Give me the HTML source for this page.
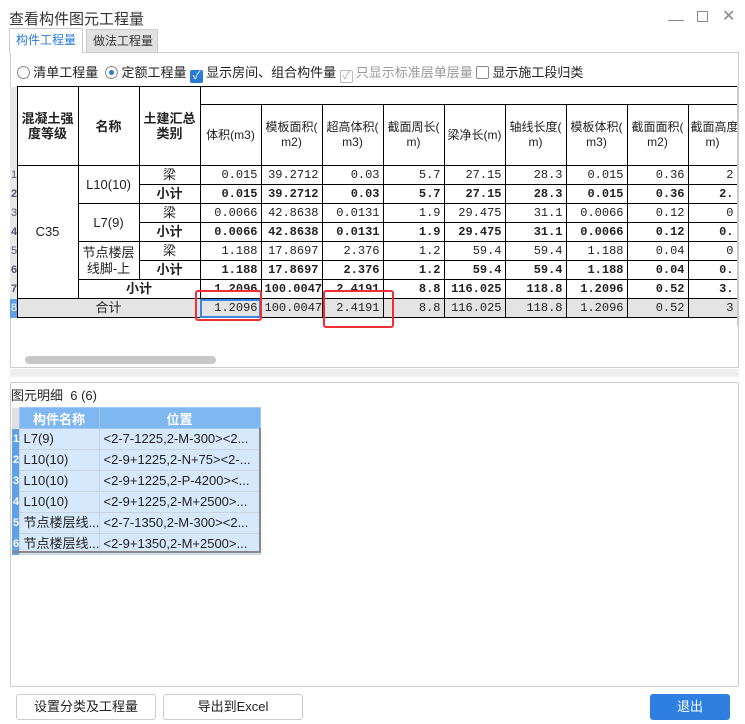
<!DOCTYPE html>
<html><head><meta charset="utf-8"><style>
*{box-sizing:border-box;margin:0;padding:0}
body{width:745px;height:724px;background:#fff;position:relative;overflow:hidden;font-family:"Liberation Sans","Noto Sans CJK SC",sans-serif;font-size:12px;color:#222}
.a{position:absolute}
.title{left:9px;top:8px;font-size:15px;color:#333}
.tab{top:29px;height:23px;font-size:12px;line-height:17px;padding:3px 6px;border:1px solid #ccc;border-bottom:none;white-space:nowrap}
table{border-collapse:collapse;table-layout:fixed}
#g td{border:1px solid #000;height:19px;line-height:16px;padding:0 3px;text-align:right;font-family:"Liberation Mono","Noto Sans CJK SC",monospace;font-size:12px;white-space:nowrap;overflow:hidden}
#g td.c{text-align:center;font-family:"Liberation Sans","Noto Sans CJK SC",sans-serif;font-size:13px}
#g tr.b td{font-weight:bold}
#g th{border:1px solid #000;font-weight:normal;font-size:12px;line-height:15px;padding:0 2px;overflow:hidden;white-space:nowrap}
#g th.h{font-weight:bold;font-size:13px}
#g tr.t td{background:#e4e4e4;font-weight:normal}
#g td.ix{border:none;border-right:1px solid #000;background:#e8e8e8;color:#557;font-size:11px;text-align:left;padding:0 1px;font-family:"Liberation Sans",sans-serif}
#s td{height:21px;line-height:18px;border:1px solid #c8d4e0;background:#d6e8fb;font-size:13px;padding:0 4px;white-space:nowrap;overflow:hidden}
#s th{height:21px;background:#7fb8f0;color:#fff;font-size:13px;border:1px solid #a0c8f0}
#s td.ix{background:#5fa0e6;color:#fff;font-size:11px;padding:0 1px;font-weight:bold;border:none}
.btn{top:694px;height:26px;border:1px solid #ccc;border-radius:3px;text-align:center;line-height:24px;font-size:13px;background:#fff}
.cb{display:inline-block;width:13px;height:13px;border:1px solid #888;vertical-align:-2px;margin-right:3px;border-radius:2px}
.rd{display:inline-block;width:13px;height:13px;border:1px solid #888;border-radius:50%;vertical-align:-2px;margin-right:3px;position:relative}
</style></head><body>
<div class="a title">查看构件图元工程量</div>
<div class="a" style="left:668px;top:9px;width:16px;height:12px;border-bottom:1px solid #888"></div>
<div class="a" style="left:697px;top:11px;width:11px;height:11px;border:1px solid #888"></div>
<div class="a" style="left:722px;top:6px;color:#888;font-size:16px">✕</div>
<div class="a" style="left:10px;top:52px;width:729px;height:316px;border:1px solid #ccc"></div>
<div class="a tab" style="left:9px;top:28px;width:74px;height:25px;background:#fff;color:#2a7ad8;z-index:2">构件工程量</div>
<div class="a tab" style="left:86px;width:72px;background:#e2e2e2;color:#333">做法工程量</div>
<div class="a" style="left:10px;top:62px;width:728px;font-size:13px;white-space:nowrap">
&nbsp;&nbsp;<span class="rd"></span>清单工程量 &nbsp;<span class="rd"><span style="position:absolute;left:3px;top:3px;width:5px;height:5px;border-radius:50%;background:#2a7ad8"></span></span>定额工程量 <span class="cb" style="background:#2a7ad8;border-color:#2a7ad8;color:#fff;font-size:11px;line-height:11px;text-align:center">✓</span>显示房间、组合构件量 <span style="color:#999"><span class="cb" style="border-color:#bbb;color:#aaa;font-size:11px;line-height:11px;text-align:center">✓</span>只显示标准层单层量</span> <span class="cb"></span>显示施工段归类</div>
<table id="g" class="a" style="left:10px;top:86px;width:727px">
<colgroup><col style="width:7px"><col style="width:61px"><col style="width:61px"><col style="width:61px"><col style="width:61px"><col style="width:61px"><col style="width:61px"><col style="width:61px"><col style="width:61px"><col style="width:61px"><col style="width:61px"><col style="width:61px"><col style="width:49px"></colgroup>
<tr style="height:18px"><td class="ix" rowspan="2"></td><th class="h" rowspan="2">混凝土强<br>度等级</th><th class="h" rowspan="2">名称</th><th class="h" rowspan="2">土建汇总<br>类别</th><th colspan="9" style="border-right:none;height:18px"></th></tr>
<tr style="height:61px"><th>体积(m3)</th><th>模板面积(<br>m2)</th><th>超高体积(<br>m3)</th><th>截面周长(<br>m)</th><th>梁净长(m)</th><th>轴线长度(<br>m)</th><th>模板体积(<br>m3)</th><th>截面面积(<br>m2)</th><th>截面高度(<br>m)</th></tr>
<tr><td class="ix">1</td><td class="c" rowspan="7">C35</td><td class="c" rowspan="2">L10(10)</td><td class="c">梁</td><td>0.015</td><td>39.2712</td><td>0.03</td><td>5.7</td><td>27.15</td><td>28.3</td><td>0.015</td><td>0.36</td><td>2</td></tr>
<tr class="b"><td class="ix">2</td><td class="c">小计</td><td>0.015</td><td>39.2712</td><td>0.03</td><td>5.7</td><td>27.15</td><td>28.3</td><td>0.015</td><td>0.36</td><td>2.</td></tr>
<tr><td class="ix">3</td><td class="c" rowspan="2">L7(9)</td><td class="c">梁</td><td>0.0066</td><td>42.8638</td><td>0.0131</td><td>1.9</td><td>29.475</td><td>31.1</td><td>0.0066</td><td>0.12</td><td>0</td></tr>
<tr class="b"><td class="ix">4</td><td class="c">小计</td><td>0.0066</td><td>42.8638</td><td>0.0131</td><td>1.9</td><td>29.475</td><td>31.1</td><td>0.0066</td><td>0.12</td><td>0.</td></tr>
<tr><td class="ix">5</td><td class="c" rowspan="2" style="line-height:16px">节点楼层<br>线脚-上</td><td class="c">梁</td><td>1.188</td><td>17.8697</td><td>2.376</td><td>1.2</td><td>59.4</td><td>59.4</td><td>1.188</td><td>0.04</td><td>0</td></tr>
<tr class="b"><td class="ix">6</td><td class="c">小计</td><td>1.188</td><td>17.8697</td><td>2.376</td><td>1.2</td><td>59.4</td><td>59.4</td><td>1.188</td><td>0.04</td><td>0.</td></tr>
<tr class="b"><td class="ix">7</td><td class="c" colspan="2">小计</td><td>1.2096</td><td>100.0047</td><td>2.4191</td><td>8.8</td><td>116.025</td><td>118.8</td><td>1.2096</td><td>0.52</td><td>3.</td></tr>
<tr class="t"><td class="ix" style="background:#5fa0e6;color:#fff">8</td><td class="c" colspan="3" style="background:#e4e4e4">合计</td><td style="outline:2px solid #3a86e0;outline-offset:-2px">1.2096</td><td>100.0047</td><td>2.4191</td><td>8.8</td><td>116.025</td><td>118.8</td><td>1.2096</td><td>0.52</td><td>3</td></tr>
</table>
<div class="a" style="left:195px;top:290px;width:67px;height:31px;border:2px solid #f03030;border-radius:3px"></div>
<div class="a" style="left:323px;top:290px;width:71px;height:38px;border:2px solid #f03030;border-radius:3px"></div>
<div class="a" style="left:737px;top:86px;width:2px;height:240px;background:#ccc"></div>
<div class="a" style="left:25px;top:356px;width:191px;height:8px;border-radius:4px;background:#c8c8c8"></div>
<div class="a" style="left:10px;top:369px;width:729px;height:8px;background:#efefef"></div>
<div class="a" style="left:10px;top:382px;width:729px;height:305px;border:1px solid #ccc;border-radius:2px"></div>
<div class="a" style="left:11px;top:385px;font-size:13px">图元明细&nbsp; 6 (6)</div>
<table id="s" class="a" style="left:12px;top:407px;width:248px">
<colgroup><col style="width:7px"><col style="width:80px"><col style="width:161px"></colgroup>
<tr><th style="background:#e0e0e0;border:none"></th><th>构件名称</th><th>位置</th></tr>
<tr><td class="ix">1</td><td>L7(9)</td><td>&lt;2-7-1225,2-M-300&gt;&lt;2...</td></tr>
<tr><td class="ix">2</td><td>L10(10)</td><td>&lt;2-9+1225,2-N+75&gt;&lt;2-...</td></tr>
<tr><td class="ix">3</td><td>L10(10)</td><td>&lt;2-9+1225,2-P-4200&gt;&lt;...</td></tr>
<tr><td class="ix">4</td><td>L10(10)</td><td>&lt;2-9+1225,2-M+2500&gt;...</td></tr>
<tr><td class="ix">5</td><td>节点楼层线...</td><td>&lt;2-7-1350,2-M-300&gt;&lt;2...</td></tr>
<tr><td class="ix">6</td><td>节点楼层线...</td><td>&lt;2-9+1350,2-M+2500&gt;...</td></tr>
</table>
<div class="a" style="left:259px;top:428px;width:2px;height:124px;background:#888"></div>
<div class="a" style="left:12px;top:551px;width:249px;height:2px;background:#888"></div>
<div class="a btn" style="left:16px;width:140px">设置分类及工程量</div>
<div class="a btn" style="left:163px;width:140px">导出到Excel</div>
<div class="a btn" style="left:650px;width:80px;background:#2f7fe0;border-color:#2f7fe0;color:#fff">退出</div>
</body></html>
